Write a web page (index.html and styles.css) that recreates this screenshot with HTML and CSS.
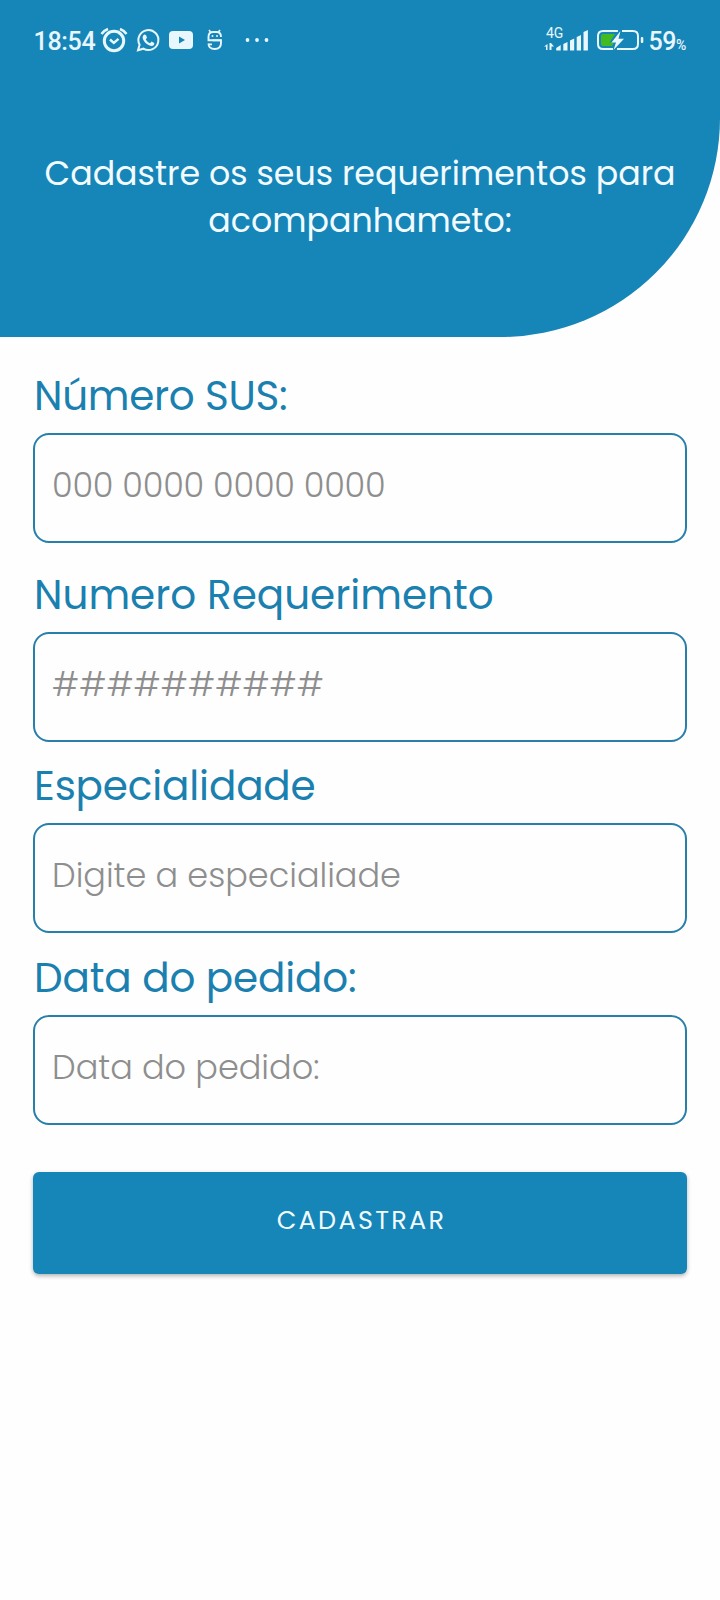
FILE: index.html
```html
<!DOCTYPE html>
<html lang="pt-BR">
<head>
<meta charset="utf-8">
<meta name="viewport" content="width=device-width, initial-scale=1">
<title>Cadastro de requerimentos</title>
<link rel="stylesheet" href="styles.css">
</head>
<body>
<header class="hero">
  <div class="status">
    <span class="clock">18:54</span>
    <svg class="icons-left" width="174" height="30" viewBox="96 25 174 30" fill="none" stroke="#e8f6fd">
      <circle cx="114" cy="41" r="9.700" stroke-width="3"/>
      <path d="M101.500 34Q104 30.500 108 29M126.500 34Q124 30.500 120 29" stroke-width="2.600"/>
      <path d="M110 39.500L113.800 42.800L118.500 38.800" stroke-width="2.400"/>
      <path d="M138 50.300L139.600 44.800A10 10 0 1 1 143.400 48.700Z" stroke-width="2"/>
      <path d="M144.200 34.600L146 35L147 37.800L145.700 39.400Q147.300 42 150 43.200L151.600 41.600L154.300 43L154 45Q151.500 47 147.600 44.600Q142.800 41.200 142.600 37.500Q142.700 35.600 144.200 34.600Z" fill="#e8f6fd" stroke="none"/>
      <rect x="169" y="31" width="24" height="18" rx="4" fill="#e8f6fd" stroke="none"/>
      <path d="M179 36.600L185 40L179 43.400Z" fill="#1685b8" stroke="none"/>
      <path d="M209 30L210.500 32M220 30L218.500 32" stroke-width="1.600"/>
      <path d="M221 37Q221 32 216.500 32H213Q208.500 32 208.500 37V40.300H221V43Q221 49 214.700 49Q208.500 49 208.500 43.500" stroke-width="1.900"/>
      <path d="M212.500 40.300H221M208.500 44.300H212" stroke-width="1.700"/>
      <g fill="#e8f6fd" stroke="none"><circle cx="212.500" cy="36" r="1"/><circle cx="217" cy="36" r="1"/><circle cx="247.500" cy="40" r="1.900"/><circle cx="257" cy="40" r="1.900"/><circle cx="266.500" cy="40" r="1.900"/></g>
    </svg>
    <div class="network">
      <span class="network-type">4G</span>
      <svg width="46" height="30" viewBox="543 25 46 30" fill="#e8f6fd">
        <path d="M544 46.500L547.500 44V50H546V46.500ZM549.500 43H551L554 46.500H551.500V50H549.500Z"/>
        <path d="M556.200 50.500V48L560.700 45V50.500ZM563.300 50.500V44L567.500 42V50.500ZM570 50.500V40.500L574.200 38.500V50.500ZM576.700 50.500V37L581 35V50.500ZM583.500 50.500V32L587.900 30V50.500Z"/>
      </svg>
    </div>
    <svg class="battery" width="48" height="30" viewBox="596 25 48 30">
      <path d="M618 31H603Q598 31 598 36V44Q598 49 603 49H613M622 31H633Q638 31 638 36V44Q638 49 633 49H617" fill="none" stroke="#e8f6fd" stroke-width="2"/>
      <path d="M603 34H615L609.500 42.500H614L612 46H603Q601 46 601 44V36Q601 34 603 34Z" fill="#43bb20"/>
      <path d="M620.500 31L611.500 42.500H616L613.500 50L624 38.800H618.500Z" fill="#e8f6fd"/>
      <rect x="640.800" y="37" width="2.500" height="6" rx="1" fill="#e8f6fd"/>
    </svg>
    <span class="charge">59<small>%</small></span>
  </div>
  <h1 class="title">Cadastre os seus requerimentos para<br>acompanhameto:</h1>
</header>
<main class="form">
  <div class="field">
    <label class="label label-sus" for="sus">Número SUS:</label>
    <input class="box digits" id="sus" placeholder="000 0000 0000 0000">
  </div>
  <div class="field">
    <label class="label" for="req">Numero Requerimento</label>
    <input class="box" id="req" placeholder="##########">
  </div>
  <div class="field tight">
    <label class="label snug" for="esp">Especialidade</label>
    <input class="box" id="esp" placeholder="Digite a especialiade">
  </div>
  <div class="field tight last">
    <label class="label snug" for="data">Data do pedido:</label>
    <input class="box" id="data" placeholder="Data do pedido:">
  </div>
  <button class="submit">CADASTRAR</button>
</main>
</body>
</html>
```
FILE: styles.css
```css
* { box-sizing: border-box; }
body { margin: 0; min-height: 1600px; background: #fefefe; font-family: Poppins, Inter, "Noto Sans", sans-serif; }
.hero { height: 337px; background: #1685b8; border-bottom-right-radius: 219px; color: #f2fbff; overflow: hidden; }
.status { display: flex; height: 30px; margin-top: 25px; padding-left: 33.500px; font-family: Roboto, sans-serif; color: #e8f6fd; }
.clock { width: 62.500px; font-size: 25px; font-weight: 500; line-height: 33px; letter-spacing: -.3px; }
.network { position: relative; width: 46px; margin-left: 273px; }
.network-type { position: absolute; left: 3px; top: 0; font-size: 14px; line-height: 16px; }
.battery { margin-left: 7px; }
.charge { margin-left: 4.500px; font-size: 25px; font-weight: 500; line-height: 33px; letter-spacing: -.5px; white-space: nowrap; }
.charge small { font-size: 14px; font-weight: 500; }
.title { margin: 95px 0 0; font-size: 33.250px; line-height: 47px; font-weight: 400; text-align: center; white-space: nowrap; }
.form { padding: 33px 33px 40px; }
.field { margin-bottom: 26px; }
.tight { margin-top: -8px; }
.last { margin-top: -7px; }
.label { display: block; height: 63px; padding-left: 1px; color: #1a80af; font-size: 40.500px; line-height: 52px; white-space: nowrap; }
.label-sus { letter-spacing: -.3px; }
.snug { letter-spacing: -.15px; }
.box { display: block; width: 654px; height: 110px; padding: 0 17px 5px; border: 2px solid #287fa9; border-radius: 16px; outline: 0; background: transparent; color: #555; font: 300 33.500px/46px Poppins, Inter, sans-serif; }
.box::placeholder { color: #8e8e8e; opacity: 1; }
.digits { padding-bottom: 4px; letter-spacing: -.2px; }
.submit { display: block; width: 654px; height: 102px; margin-top: 47px; padding: 0 0 6px 3px; border: 0; border-radius: 6px; background: #1685b8; box-shadow: 0 2px 4px rgba(0,0,0,.3); color: #f2fbff; font: 400 25.500px/46px Poppins, Inter, sans-serif; letter-spacing: 2.300px; }
```
